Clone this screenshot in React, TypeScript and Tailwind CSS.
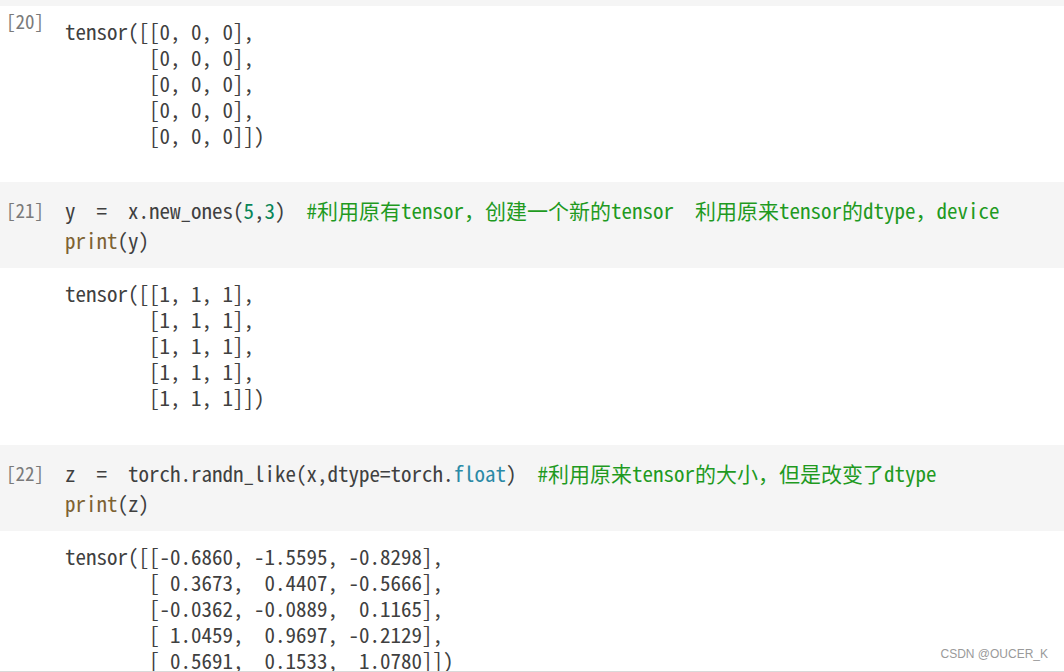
const mono = "font-['Noto_Sans_Mono_CJK_SC','Liberation_Mono','Noto_Sans_CJK_SC',monospace]";

const Out = ({ lines }: { lines: string[] }) => (
    <div className="pl-[65px] text-[21px] leading-[26px] text-[#404040] whitespace-pre">
        {lines.map((l, i) => <div key={i}>{l}</div>)}
    </div>
)

const Label = ({ n }: { n: number }) => (
    <div className="absolute left-[6px] text-[19px] leading-[30px] text-[#7a7a7a] whitespace-pre">[{n}]</div>
)

export default function App() {
    return (
        <div className={`relative h-[672px] overflow-hidden bg-white ${mono}`}>
            <div className="h-[6px] bg-[#f5f5f5]" />

            {/* output 20 */}
            <div className="relative pt-[12px] pb-[34px]">
                <div className="absolute left-[6px] top-[2px] text-[19px] leading-[26px] text-[#7a7a7a]">[20]</div>
                <Out lines={[
                    'tensor([[0, 0, 0],',
                    '        [0, 0, 0],',
                    '        [0, 0, 0],',
                    '        [0, 0, 0],',
                    '        [0, 0, 0]])',
                ]} />
            </div>

            {/* cell 21 */}
            <div className="relative h-[86px] bg-[#f5f5f5] pt-[13px] text-[21px] leading-[30px] text-[#404040] whitespace-pre">
                <Label n={21} />
                <div className="pl-[65px]">
                    <div>y  =  x.new_ones(<span className="text-[#098658]">5</span>,<span className="text-[#098658]">3</span>)  <span className="text-[#1f9a1f]">#利用原有tensor，创建一个新的tensor  利用原来tensor的dtype，device</span></div>
                    <div><span className="text-[#7d6232]">print</span>(y)</div>
                </div>
            </div>

            {/* output 21 */}
            <div className="pt-[12px] pb-[35px]">
                <Out lines={[
                    'tensor([[1, 1, 1],',
                    '        [1, 1, 1],',
                    '        [1, 1, 1],',
                    '        [1, 1, 1],',
                    '        [1, 1, 1]])',
                ]} />
            </div>

            {/* cell 22 */}
            <div className="relative h-[86px] bg-[#f5f5f5] pt-[13px] text-[21px] leading-[30px] text-[#404040] whitespace-pre">
                <Label n={22} />
                <div className="pl-[65px]">
                    <div>z  =  torch.randn_like(x,dtype=torch.<span className="text-[#2b8aa6]">float</span>)  <span className="text-[#1f9a1f]">#利用原来tensor的大小，但是改变了dtype</span></div>
                    <div><span className="text-[#7d6232]">print</span>(z)</div>
                </div>
            </div>

            {/* output 22 */}
            <div className="pt-[12px]">
                <Out lines={[
                    'tensor([[-0.6860, -1.5595, -0.8298],',
                    '        [ 0.3673,  0.4407, -0.5666],',
                    '        [-0.0362, -0.0889,  0.1165],',
                    '        [ 1.0459,  0.9697, -0.2129],',
                    '        [ 0.5691,  0.1533,  1.0780]])',
                ]} />
            </div>

            <div className="absolute bottom-0 left-0 right-0 h-px bg-[#d9d9d9]" />
            <div className="absolute right-[16px] bottom-[9px] font-['Liberation_Sans',sans-serif] text-[12px] text-[#9a9a9a]">CSDN @OUCER_K</div>
        </div>
    )
}
